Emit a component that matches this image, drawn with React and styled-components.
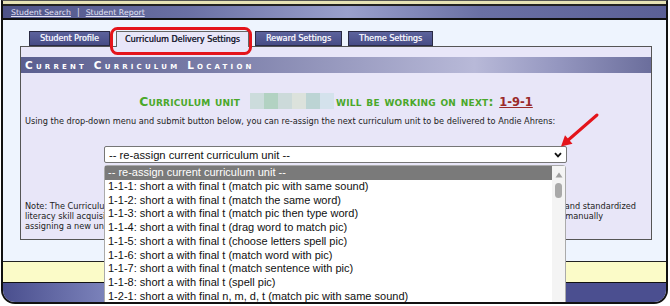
import React from "react";
import styled, { createGlobalStyle } from "styled-components";

const Global = createGlobalStyle`
  html, body { margin: 0; padding: 0; background: #ffffff; }
  body { width: 670px; height: 306px; overflow: hidden; position: relative; font-family: "DejaVu Sans", Verdana, sans-serif; }
`;

const Frame = styled.div`
  margin-left: 1px;
  width: 667px;
  box-sizing: border-box;
  border-left: 2px solid #111;
  border-right: 2px solid #111;
  border-top: 1px solid #555;
  border-bottom: 2px solid #111;
  border-radius: 0 0 14px 14px;
  overflow: hidden;
`;

const TopStrip = styled.div`
  height: 3px;
  background: #e6e2b4;
  border-bottom: 2px solid #222;
`;

const Nav = styled.div`
  height: 12px;
  display: flex;
  align-items: center;
  gap: 6px;
  padding-left: 8px;
  background: linear-gradient(90deg, #4e5388 0%, #6a70a4 28%, #9aa0cc 52%, #6a70a4 72%, #5b6096 100%);
  border-bottom: 2px solid #111;
`;

const NavLink = styled.a`
  font-size: 7.8px;
  color: #e2e2f4;
  text-decoration: underline;
  white-space: nowrap;
`;

const NavSep = styled.span`
  font-size: 8px;
  color: #e2e2f4;
`;

const Main = styled.div`
  background: #eef4fe;
  padding: 11px 14px 21px 17px;
  border-bottom: 1px solid #222;
`;

const Tabs = styled.div`
  display: flex;
  gap: 6px;
  padding-left: 9px;
  height: 15px;
  position: relative;
  z-index: 1;
`;

const Tab = styled.div`
  height: ${(p) => (p.$active ? "16px" : "15px")};
  box-sizing: border-box;
  padding: 0 ${(p) => (p.$active ? 8 : 10)}px;
  display: flex;
  align-items: center;
  font-size: 8px;
  white-space: nowrap;
  border: 1px solid ${(p) => (p.$active ? "#666" : "#2a2a44")};
  border-bottom: ${(p) => (p.$active ? "none" : "1px solid #2a2a44")};
  background: ${(p) => (p.$active ? "#e8e6f8" : "linear-gradient(180deg, #5c629c 0%, #474c86 100%)")};
  color: ${(p) => (p.$active ? "#222233" : "#eeeef8")};
  text-shadow: ${(p) => (p.$active ? "0.3px 0 0 #222233" : "0.3px 0 0 #eeeef8")};
`;

const Panel = styled.div`
  background: #e8e6f8;
  border: 1px solid #555;
  padding-top: 10px;
  height: 194px;
  box-sizing: border-box;
  position: relative;
`;

const HeadBar = styled.div`
  height: 16px;
  display: flex;
  align-items: center;
  padding-left: 4px;
  background: linear-gradient(90deg, #5b5f90 0%, #7a7da8 30%, #b8b9d8 72%, #9597c0 85%, #6b6e9c 100%);
  color: #ffffff;
  font-size: 10.5px;
  font-weight: bold;
  font-variant: small-caps;
  letter-spacing: 3.2px;
  white-space: nowrap;
`;

const UnitLine = styled.div`
  margin-top: 20px;
  display: flex;
  justify-content: center;
  align-items: center;
  gap: 10px;
  height: 16px;
  font-weight: bold;
  font-variant: small-caps;
  color: #4aa82a;
  font-size: 12.4px;
  letter-spacing: 0.2px;
  white-space: nowrap;
`;

const Redacted = styled.div`
  display: flex;
  height: 16px;
  margin-right: -8px;
`;

const Patch = styled.div`
  width: 14px;
  height: 16px;
  background: ${(p) => p.$c};
`;

const Tail = styled.span`
  letter-spacing: 0.25px;
`;

const NextUnit = styled.a`
  color: #9b2a2a;
  text-decoration: underline;
  font-size: 11.5px;
  font-variant: normal;
  letter-spacing: 0;
  margin-left: 1px;
`;

const Para = styled.p`
  margin: 7px 0 0 0;
  padding-left: 4px;
  font-size: 8.2px;
  line-height: 10px;
  color: #222;
  white-space: nowrap;
`;

const SelectWrap = styled.div`
  position: relative;
  margin: 20px 0 0 83px;
  width: 463px;
`;

const SelectBox = styled.div`
  height: 17px;
  box-sizing: border-box;
  background: #fff;
  border: 1px solid #767676;
  border-radius: 2px;
  display: flex;
  align-items: center;
  justify-content: space-between;
  padding: 0 4px 0 4px;
  font-family: "Liberation Sans", Arial, sans-serif;
  font-size: 11.2px;
  color: #111;
`;

const List = styled.div`
  position: absolute;
  left: 0;
  top: 19px;
  width: 462px;
  height: 150px;
  box-sizing: border-box;
  background: #fff;
  border: 1px solid #aaa;
  border-radius: 3px 3px 0 0;
  display: flex;
  z-index: 3;
  font-family: "Liberation Sans", Arial, sans-serif;
  font-size: 11px;
  color: #111;
`;

const Options = styled.div`
  flex: 1;
  display: flex;
  flex-direction: column;
`;

const Option = styled.div`
  height: 13.75px;
  line-height: 13.75px;
  padding-left: 3px;
  white-space: nowrap;
  background: ${(p) => (p.$sel ? "#7a7a7a" : "transparent")};
  color: ${(p) => (p.$sel ? "#ffffff" : "#111")};
`;

const Scroll = styled.div`
  width: 13px;
  background: #f4f4f4;
  display: flex;
  flex-direction: column;
  align-items: center;
  padding-top: 6px;
  gap: 5px;
`;

const Thumb = styled.div`
  width: 7px;
  height: 15px;
  border-radius: 4px;
  background: #a9a9a9;
`;

const Note = styled.div`
  position: absolute;
  left: 0;
  right: 0;
  bottom: 8px;
  padding-left: 4px;
  font-size: 8.2px;
  line-height: 10px;
  color: #222;
  overflow: hidden;
`;

const NoteLine = styled.div`
  white-space: nowrap;
`;

const YellowBand = styled.div`
  height: 20px;
  background: #fbfbc8;
  border-bottom: 1px solid #111;
`;

const Footer = styled.div`
  height: 19px;
  background: linear-gradient(90deg, #4a4f8e 0%, #7d84bc 16%, #5a5f9a 34%, #4b4f90 60%, #4b4f90 100%);
`;

const Overlay = styled.svg`
  position: absolute;
  left: 0;
  top: 0;
  width: 670px;
  height: 306px;
  pointer-events: none;
  z-index: 10;
`;

const options = [
  "1-1-1: short a with final t (match pic with same sound)",
  "1-1-2: short a with final t (match the same word)",
  "1-1-3: short a with final t (match pic then type word)",
  "1-1-4: short a with final t (drag word to match pic)",
  "1-1-5: short a with final t (choose letters spell pic)",
  "1-1-6: short a with final t (match word with pic)",
  "1-1-7: short a with final t (match sentence with pic)",
  "1-1-8: short a with final t (spell pic)",
  "1-2-1: short a with final n, m, d, t (match pic with same sound)",
];

const patches = ["#ccdcdc", "#b2d2c2", "#ccdada", "#dce2dc", "#bcd4d4", "#d4e2ec"];

export default function App() {
  return (
    <>
      <Global />
      <Frame>
        <TopStrip />
        <Nav>
          <NavLink>Student Search</NavLink>
          <NavSep>|</NavSep>
          <NavLink>Student Report</NavLink>
        </Nav>
        <Main>
          <Tabs>
            <Tab>Student Profile</Tab>
            <Tab $active>Curriculum Delivery Settings</Tab>
            <Tab>Reward Settings</Tab>
            <Tab>Theme Settings</Tab>
          </Tabs>
          <Panel>
            <HeadBar>Current Curriculum Location</HeadBar>
            <UnitLine>
              <span>Curriculum unit</span>
              <Redacted>
                {patches.map((c, i) => (
                  <Patch key={i} $c={c} />
                ))}
              </Redacted>
              <Tail>
                will be working on next: <NextUnit>1-9-1</NextUnit>
              </Tail>
            </UnitLine>
            <Para>
              Using the drop-down menu and submit button below, you can re-assign the next curriculum unit to be delivered to Andie Ahrens:
            </Para>
            <SelectWrap>
              <SelectBox>
                <span>-- re-assign current curriculum unit --</span>
                <svg width="8" height="6" viewBox="0 0 8 6">
                  <path d="M1 1.2 L4 4.4 L7 1.2" fill="none" stroke="#111" strokeWidth="1.8" />
                </svg>
              </SelectBox>
              <List>
                <Options>
                  <Option $sel>-- re-assign current curriculum unit --</Option>
                  {options.map((o) => (
                    <Option key={o}>{o}</Option>
                  ))}
                </Options>
                <Scroll>
                  <svg width="8" height="6" viewBox="0 0 8 6">
                    <path d="M4 0.5 L7.5 5.5 L0.5 5.5 Z" fill="#a0a0a0" />
                  </svg>
                  <Thumb />
                </Scroll>
              </List>
            </SelectWrap>
            <Note>
              <NoteLine>
                Note: The Curriculum Delivery Settings tab allows you to override the default lesson sequence of units, which is based on research and standardized
              </NoteLine>
              <NoteLine>
                literacy skill acquisition milestones. We recommend that you allow the program to deliver units in order and also use caution when manually
              </NoteLine>
              <NoteLine>
                assigning a new unit, as skipping units may affect the student's progress.
              </NoteLine>
            </Note>
          </Panel>
        </Main>
        <YellowBand />
        <Footer />
      </Frame>
      <Overlay viewBox="0 0 670 306">
        <rect x="111.5" y="28.5" width="139" height="25" rx="6" fill="none" stroke="#e4141b" strokeWidth="3" />
        <line x1="597" y1="115" x2="566" y2="142" stroke="#e4141b" strokeWidth="3" strokeLinecap="round" />
        <path d="M561 146.5 L572.5 143.8 L565 135.2 Z" fill="#e4141b" />
      </Overlay>
    </>
  );
}
